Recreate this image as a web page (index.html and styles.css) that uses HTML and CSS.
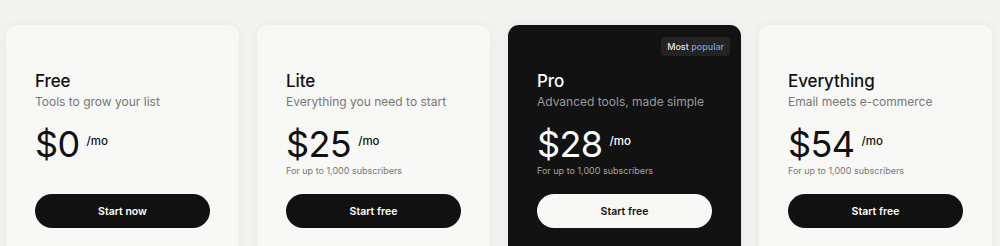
FILE: index.html
```html
<!DOCTYPE html>
<html lang="en">
<head>
<meta charset="utf-8">
<title>Pricing</title>
<link rel="stylesheet" href="styles.css">
</head>
<body>
<main class="plans">
  <section class="card">
    <h2 class="name">Free</h2>
    <p class="tagline">Tools to grow your list</p>
    <div class="price"><span class="amount">$0</span><span class="per">/mo</span></div>
    <p class="note note-empty">&nbsp;</p>
    <a class="btn" href="#">Start now</a>
  </section>
  <section class="card">
    <h2 class="name">Lite</h2>
    <p class="tagline">Everything you need to start</p>
    <div class="price"><span class="amount">$25</span><span class="per">/mo</span></div>
    <p class="note">For up to 1,000 subscribers</p>
    <a class="btn" href="#">Start free</a>
  </section>
  <section class="card card-dark">
    <span class="badge">Most <span class="badge-accent">popular</span></span>
    <h2 class="name">Pro</h2>
    <p class="tagline">Advanced tools, made simple</p>
    <div class="price"><span class="amount">$28</span><span class="per">/mo</span></div>
    <p class="note">For up to 1,000 subscribers</p>
    <a class="btn" href="#">Start free</a>
  </section>
  <section class="card">
    <h2 class="name">Everything</h2>
    <p class="tagline">Email meets e-commerce</p>
    <div class="price"><span class="amount">$54</span><span class="per">/mo</span></div>
    <p class="note">For up to 1,000 subscribers</p>
    <a class="btn" href="#">Start free</a>
  </section>
</main>
</body>
</html>
```
FILE: styles.css
```css
* { box-sizing: border-box; }
html, body { margin: 0; padding: 0; }
body {
  background: #f3f3f2;
  font-family: Inter, "Noto Sans", Arial, sans-serif;
  color: #111;
  overflow: hidden;
}
.plans {
  display: grid;
  grid-template-columns: repeat(4, 233px);
  column-gap: 18px;
  padding: 25px 0 0 6px;
}
.card {
  position: relative;
  background: #f8f8f6;
  border-radius: 11px;
  padding: 44px 29px 40px;
  box-shadow: 0 0 14px rgba(0,0,0,0.05);
  height: 260px;
}
.card-dark {
  background: #121212;
  color: #fff;
}
.name {
  margin: 0;
  font-size: 17px;
  font-weight: 500;
  line-height: 24px;
  letter-spacing: -0.1px;
}
.tagline {
  margin: 0;
  font-size: 12px;
  line-height: 18px;
  color: #777;
}
.card-dark .tagline { color: #9a9a9a; }
.price {
  display: flex;
  align-items: flex-start;
  margin-top: 12px;
  height: 42px;
}
.amount {
  font-size: 36px;
  line-height: 42px;
  font-weight: 400;
  letter-spacing: -0.6px;
}
.per {
  font-size: 11.5px;
  font-weight: 500;
  margin-left: 7px;
  margin-top: 11px;
}
.note {
  margin: -1px 0 0;
  font-size: 9px;
  line-height: 14px;
  color: #777;
}
.card-dark .note { color: #a5a5a5; }
.btn {
  display: flex;
  align-items: center;
  justify-content: center;
  margin-top: 16px;
  height: 34px;
  border-radius: 17px;
  background: #111;
  color: #fff;
  font-size: 10.5px;
  font-weight: 600;
  text-decoration: none;
}
.card-dark .btn {
  background: #f8f8f6;
  color: #111;
}
.badge {
  position: absolute;
  top: 12px;
  right: 11px;
  background: #232323;
  color: #e2e2e2;
  font-size: 9px;
  font-weight: 500;
  line-height: 19px;
  padding: 0 6px;
  border-radius: 4px;
}
.badge-accent { color: #7d9fd8; }
```
